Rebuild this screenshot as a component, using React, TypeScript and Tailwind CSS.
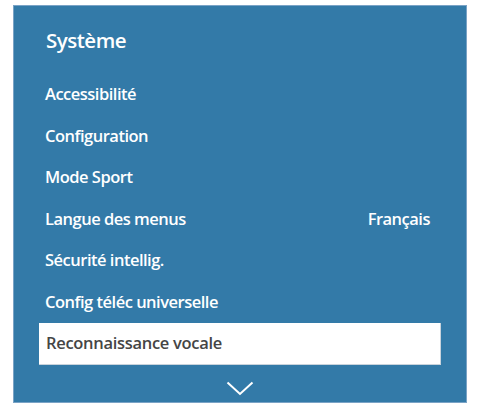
const FONT = { fontFamily: '"Open Sans", "Noto Sans", sans-serif' };

const ITEMS: { label: string; value?: string; selected?: boolean }[] = [
  { label: "Accessibilité" },
  { label: "Configuration" },
  { label: "Mode Sport" },
  { label: "Langue des menus", value: "Français" },
  { label: "Sécurité intellig." },
  { label: "Config téléc universelle" },
  { label: "Reconnaissance vocale", selected: true },
];

function MenuRow({ label, value, selected }: { label: string; value?: string; selected?: boolean }) {
  return (
    <div
      className={
        selected
          ? "h-[41.5px] flex items-center justify-between pl-[7px] pr-[11px] bg-white text-[#454545] border-r border-b border-[#c9d3dc]"
          : "h-[41.5px] flex items-center justify-between pl-[6px] pr-[11px] text-white"
      }
    >
      <span
        className={
          selected
            ? "text-[16.5px] font-semibold tracking-[-0.3px]"
            : "text-[16.5px] font-semibold tracking-[-0.5px]"
        }
      >
        {label}
      </span>
      {value && <span className="text-[16.5px] font-semibold tracking-[-0.5px]">{value}</span>}
    </div>
  );
}

export default function App() {
  return (
    <div className="w-[477px] h-[414px] bg-white pt-[5px] pl-[13px]" style={FONT}>
      <div className="w-[454px] h-[398px] bg-[#337aa8] border border-[#7aa3c6] flex flex-col">
        <div className="h-[68px] flex items-center pl-[32px] pt-[1px]">
          <span className="text-[20.5px] font-semibold text-white tracking-[-0.5px]">Système</span>
        </div>
        <div className="flex flex-col px-[25px]">
          {ITEMS.map((it) => (
            <MenuRow key={it.label} {...it} />
          ))}
        </div>
        <div className="flex justify-center pt-[16px]">
          <svg width="28" height="15" viewBox="0 0 28 15" fill="none">
            <path d="M1.5 1.5 L14 13 L26.5 1.5" stroke="white" strokeWidth="2" />
          </svg>
        </div>
      </div>
    </div>
  );
}
